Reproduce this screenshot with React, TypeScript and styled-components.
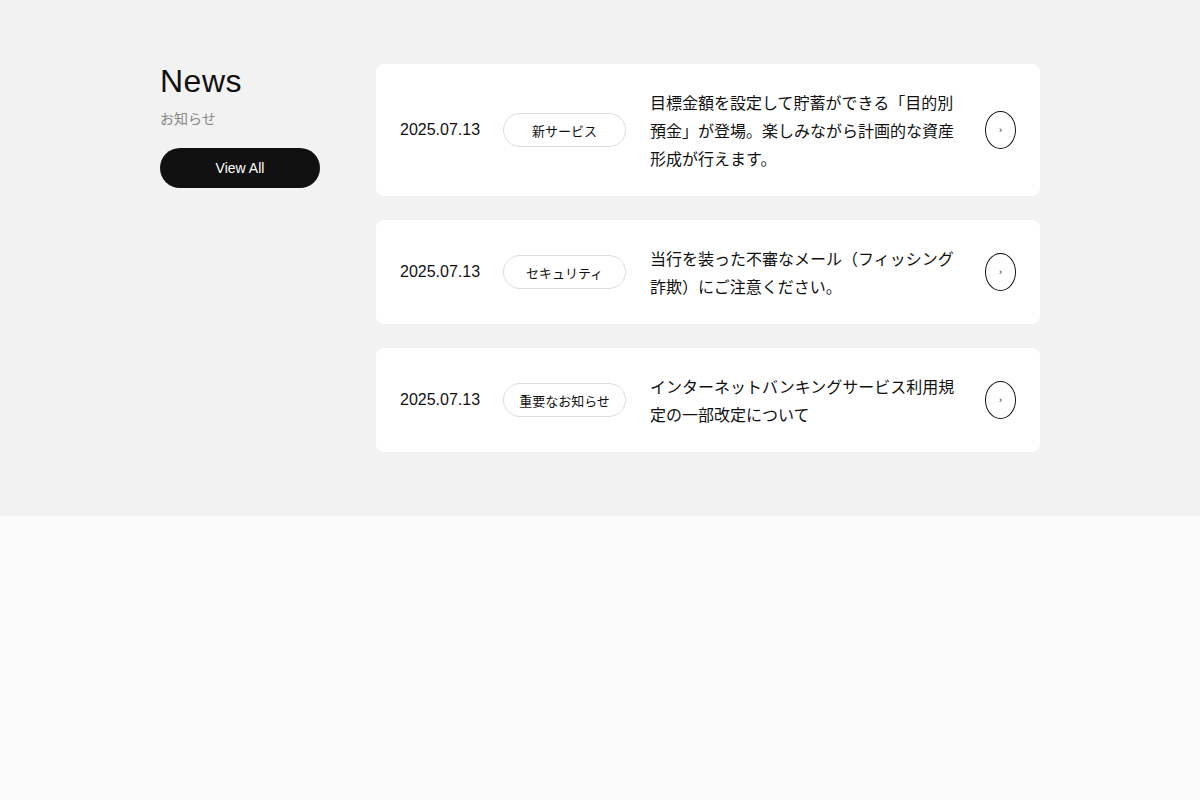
import styled, { createGlobalStyle } from 'styled-components';

const GlobalStyle = createGlobalStyle`
  html, body {
    margin: 0;
    padding: 0;
    background: #fbfbfb;
  }
  body {
    font-family: "Liberation Sans", "Noto Sans CJK JP", sans-serif;
    color: #111;
  }
`;

// news section
const Section = styled.section`
  background: #f2f2f2;
  padding: 64px 0;
`;

const Inner = styled.div`
  width: 880px;
  margin: 0 auto;
  display: flex;
  gap: 56px;
  align-items: flex-start;
`;

const Side = styled.div`
  width: 160px;
  flex-shrink: 0;
  display: flex;
  flex-direction: column;
`;

const Heading = styled.h2`
  margin: 0;
  font-size: 32px;
  font-weight: 400;
  line-height: 34px;
  letter-spacing: 0.5px;
  color: #111;
`;

const SubHeading = styled.p`
  margin: 10px 0 0 0;
  font-family: "Noto Sans CJK JP", sans-serif;
  font-size: 14px;
  line-height: 20px;
  color: #888;
`;

const ViewAllButton = styled.button`
  margin-top: 20px;
  width: 160px;
  height: 40px;
  border: none;
  border-radius: 20px;
  background: #111;
  color: #fff;
  font-family: "Liberation Sans", sans-serif;
  font-size: 14px;
  font-weight: 500;
  cursor: pointer;
`;

const List = styled.ul`
  list-style: none;
  margin: 0;
  padding: 0;
  flex: 1;
  display: flex;
  flex-direction: column;
  gap: 24px;
`;

const Card = styled.li`
  background: #fff;
  border-radius: 8px;
  padding: 24px;
  display: grid;
  grid-template-columns: 79px 123px 1fr 31px;
  gap: 24px;
  align-items: center;
`;

const DateText = styled.time`
  font-size: 16px;
  color: #111;
  white-space: nowrap;
`;

const Tag = styled.span`
  height: 34px;
  box-sizing: border-box;
  border: 1px solid #dedede;
  border-radius: 17px;
  display: flex;
  align-items: center;
  justify-content: center;
  font-family: "Noto Sans CJK JP", sans-serif;
  font-size: 13px;
  color: #111;
`;

const Title = styled.p`
  margin: 0;
  font-family: "Noto Sans CJK JP", sans-serif;
  font-size: 16px;
  line-height: 28px;
  color: #111;
`;

const Arrow = styled.a`
  width: 31px;
  height: 38px;
  box-sizing: border-box;
  border: 1px solid #111;
  border-radius: 50%;
  display: flex;
  align-items: center;
  justify-content: center;
  font-size: 9px;
  color: #111;
  text-decoration: none;
`;

const Lower = styled.div`
  height: 284px;
  background: #fbfbfb;
`;

const newsItems = [
  {
    date: '2025.07.13',
    tag: '新サービス',
    title: '目標金額を設定して貯蓄ができる「目的別預金」が登場。楽しみながら計画的な資産形成が行えます。',
  },
  {
    date: '2025.07.13',
    tag: 'セキュリティ',
    title: '当行を装った不審なメール（フィッシング詐欺）にご注意ください。',
  },
  {
    date: '2025.07.13',
    tag: '重要なお知らせ',
    title: 'インターネットバンキングサービス利用規定の一部改定について',
  },
];

function App() {
  return (
    <>
      <GlobalStyle />
      <Section>
        <Inner>
          <Side>
            <Heading>News</Heading>
            <SubHeading>お知らせ</SubHeading>
            <ViewAllButton>View All</ViewAllButton>
          </Side>
          <List>
            {newsItems.map((item, i) => (
              <Card key={i}>
                <DateText>{item.date}</DateText>
                <Tag>{item.tag}</Tag>
                <Title>{item.title}</Title>
                <Arrow href="#">›</Arrow>
              </Card>
            ))}
          </List>
        </Inner>
      </Section>
      <Lower />
    </>
  );
}

export default App;
